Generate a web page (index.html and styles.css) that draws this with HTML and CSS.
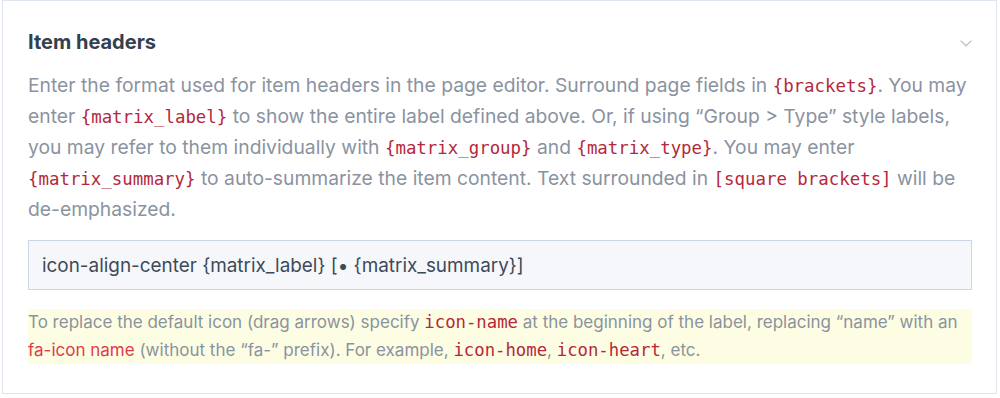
FILE: index.html
```html
<!DOCTYPE html>
<html>
<head>
<meta charset="utf-8">
<link rel="stylesheet" href="styles.css">
</head>
<body>
<div class="card">
  <div class="header">
    <h2 class="title">Item headers</h2>
    <svg class="chevron" width="12" height="7" viewBox="0 0 12 7"><path d="M0.6 0.6 L6 5.8 L11.4 0.6" fill="none" stroke="#b9c0c9" stroke-width="1.2"/></svg>
  </div>
  <p class="desc">Enter the format used for item headers in the page editor. Surround page fields in <code>{brackets}</code>. You may enter <code>{matrix_label}</code> to show the entire label defined above. Or, if using “Group &gt; Type” style labels, you may refer to them individually with <code>{matrix_group}</code> and <code>{matrix_type}</code>. You may enter <code>{matrix_summary}</code> to auto-summarize the item content. Text surrounded in <code>[square brackets]</code> will be de-emphasized.</p>
  <div class="field">icon-align-center {matrix_label} [• {matrix_summary}]</div>
  <p class="hint">To replace the default icon (drag arrows) specify <code>icon-name</code> at the beginning of the label, replacing “name” with an <a class="link">fa-icon name</a> (without the “fa-” prefix). For example, <code>icon-home</code>, <code>icon-heart</code>, etc.</p>
</div>
</body>
</html>
```

FILE: styles.css
```css
html, body {
  margin: 0;
  padding: 0;
  background: #ffffff;
}
body {
  font-family: Inter, "Noto Sans", sans-serif;
}
.card {
  margin: 0 3px 0 2px;
  height: 394px;
  box-sizing: border-box;
  border: 1px solid #dfe5ee;
  padding: 28px 24px 0 25px;
}
.header {
  display: flex;
  justify-content: space-between;
  align-items: center;
  height: 26px;
}
.title {
  margin: 0;
  font-size: 20px;
  line-height: 26px;
  font-weight: 700;
  color: #33404e;
}
.chevron {
  display: block;
  margin-right: 0;
  margin-top: 2px;
}
.desc {
  margin: 15px 0 0 0;
  font-size: 19.3px;
  line-height: 31px;
  color: #8a939f;
}
code {
  font-family: "DejaVu Sans Mono", "Liberation Mono", monospace;
  font-size: 17.4px;
  line-height: 1;
  color: #b5283b;
}
.field {
  margin-top: 15px;
  height: 50px;
  box-sizing: border-box;
  border: 1px solid #cbd7e6;
  background: #f5f7fb;
  padding: 0 13px;
  display: flex;
  align-items: center;
  font-size: 18.9px;
  color: #3d4a58;
}
.hint {
  margin: 19px 0 0 0;
  background: #fdfde3;
  font-size: 17px;
  line-height: 27.5px;
  color: #8a939f;
}
.hint code {
  font-size: 17.3px;
}
.link {
  color: #df3a4c;
}
```
